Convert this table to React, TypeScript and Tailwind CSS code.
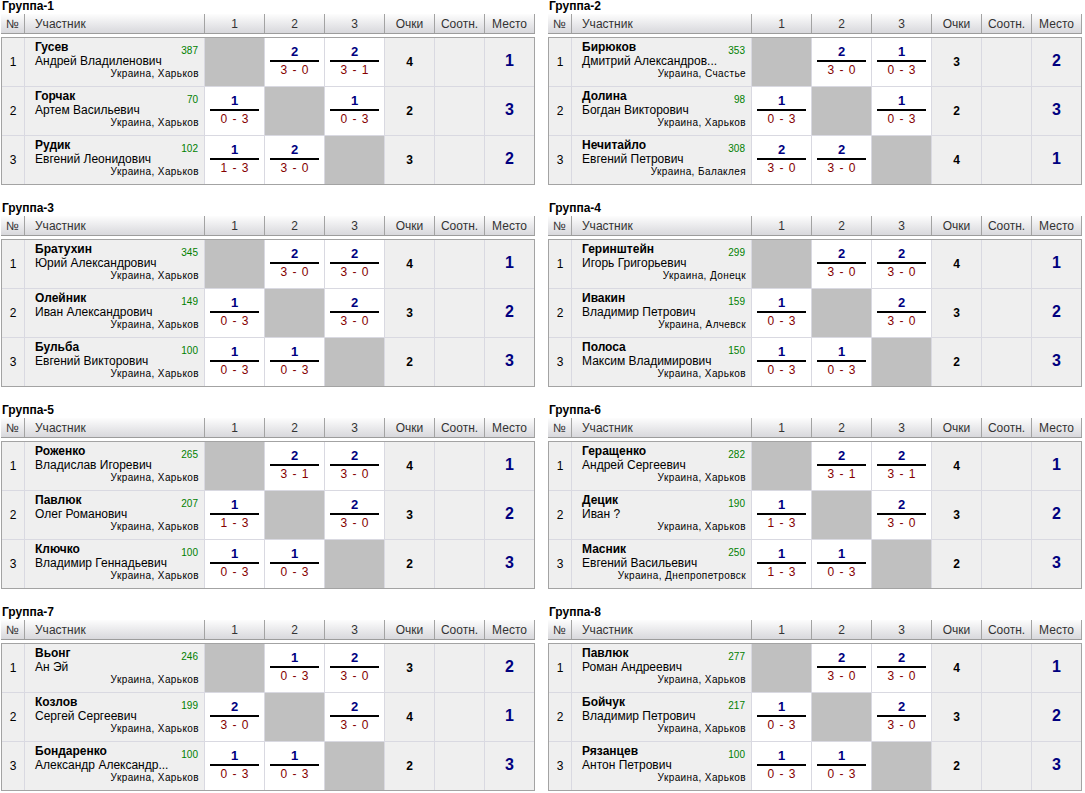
type Game = [number, string] | null;

type Player = {
  last: string;
  first: string;
  rating: number;
  city: string;
  games: Game[];
  points: number;
  place: number;
};

type Group = { title: string; players: Player[] };

const KH = "Украина, Харьков";

const groups: Group[] = [
  {
    title: "Группа-1",
    players: [
      { last: "Гусев", first: "Андрей Владиленович", rating: 387, city: KH, games: [null, [2, "3 - 0"], [2, "3 - 1"]], points: 4, place: 1 },
      { last: "Горчак", first: "Артем Васильевич", rating: 70, city: KH, games: [[1, "0 - 3"], null, [1, "0 - 3"]], points: 2, place: 3 },
      { last: "Рудик", first: "Евгений Леонидович", rating: 102, city: KH, games: [[1, "1 - 3"], [2, "3 - 0"], null], points: 3, place: 2 },
    ],
  },
  {
    title: "Группа-2",
    players: [
      { last: "Бирюков", first: "Дмитрий Александров...", rating: 353, city: "Украина, Счастье", games: [null, [2, "3 - 0"], [1, "0 - 3"]], points: 3, place: 2 },
      { last: "Долина", first: "Богдан Викторович", rating: 98, city: KH, games: [[1, "0 - 3"], null, [1, "0 - 3"]], points: 2, place: 3 },
      { last: "Нечитайло", first: "Евгений Петрович", rating: 308, city: "Украина, Балаклея", games: [[2, "3 - 0"], [2, "3 - 0"], null], points: 4, place: 1 },
    ],
  },
  {
    title: "Группа-3",
    players: [
      { last: "Братухин", first: "Юрий Александрович", rating: 345, city: KH, games: [null, [2, "3 - 0"], [2, "3 - 0"]], points: 4, place: 1 },
      { last: "Олейник", first: "Иван Александрович", rating: 149, city: KH, games: [[1, "0 - 3"], null, [2, "3 - 0"]], points: 3, place: 2 },
      { last: "Бульба", first: "Евгений Викторович", rating: 100, city: KH, games: [[1, "0 - 3"], [1, "0 - 3"], null], points: 2, place: 3 },
    ],
  },
  {
    title: "Группа-4",
    players: [
      { last: "Геринштейн", first: "Игорь Григорьевич", rating: 299, city: "Украина, Донецк", games: [null, [2, "3 - 0"], [2, "3 - 0"]], points: 4, place: 1 },
      { last: "Ивакин", first: "Владимир Петрович", rating: 159, city: "Украина, Алчевск", games: [[1, "0 - 3"], null, [2, "3 - 0"]], points: 3, place: 2 },
      { last: "Полоса", first: "Максим Владимирович", rating: 150, city: KH, games: [[1, "0 - 3"], [1, "0 - 3"], null], points: 2, place: 3 },
    ],
  },
  {
    title: "Группа-5",
    players: [
      { last: "Роженко", first: "Владислав Игоревич", rating: 265, city: KH, games: [null, [2, "3 - 1"], [2, "3 - 0"]], points: 4, place: 1 },
      { last: "Павлюк", first: "Олег Романович", rating: 207, city: KH, games: [[1, "1 - 3"], null, [2, "3 - 0"]], points: 3, place: 2 },
      { last: "Ключко", first: "Владимир Геннадьевич", rating: 100, city: KH, games: [[1, "0 - 3"], [1, "0 - 3"], null], points: 2, place: 3 },
    ],
  },
  {
    title: "Группа-6",
    players: [
      { last: "Геращенко", first: "Андрей Сергеевич", rating: 282, city: KH, games: [null, [2, "3 - 1"], [2, "3 - 1"]], points: 4, place: 1 },
      { last: "Децик", first: "Иван ?", rating: 190, city: KH, games: [[1, "1 - 3"], null, [2, "3 - 0"]], points: 3, place: 2 },
      { last: "Масник", first: "Евгений Васильевич", rating: 250, city: "Украина, Днепропетровск", games: [[1, "1 - 3"], [1, "0 - 3"], null], points: 2, place: 3 },
    ],
  },
  {
    title: "Группа-7",
    players: [
      { last: "Вьонг", first: "Ан Эй", rating: 246, city: KH, games: [null, [1, "0 - 3"], [2, "3 - 0"]], points: 3, place: 2 },
      { last: "Козлов", first: "Сергей Сергеевич", rating: 199, city: KH, games: [[2, "3 - 0"], null, [2, "3 - 0"]], points: 4, place: 1 },
      { last: "Бондаренко", first: "Александр Александр...", rating: 100, city: KH, games: [[1, "0 - 3"], [1, "0 - 3"], null], points: 2, place: 3 },
    ],
  },
  {
    title: "Группа-8",
    players: [
      { last: "Павлюк", first: "Роман Андреевич", rating: 277, city: KH, games: [null, [2, "3 - 0"], [2, "3 - 0"]], points: 4, place: 1 },
      { last: "Бойчук", first: "Владимир Петрович", rating: 217, city: KH, games: [[1, "0 - 3"], null, [2, "3 - 0"]], points: 3, place: 2 },
      { last: "Рязанцев", first: "Антон Петрович", rating: 100, city: KH, games: [[1, "0 - 3"], [1, "0 - 3"], null], points: 2, place: 3 },
    ],
  },
];

const headCell = "flex items-center justify-center border-r border-[#a3a3a3]";

function HeaderRow() {
  return (
    <div className="grid h-[20px] grid-cols-[24px_180px_60px_60px_60px_50px_50px_50px] border-b border-[#9c9c9c] bg-linear-to-b from-[#fdfdfd] to-[#d8d8dc] text-[12px] leading-none text-[#333]">
      <div className={headCell}>№</div>
      <div className="flex items-center border-r border-[#a3a3a3] pl-[10px]">Участник</div>
      <div className={headCell}>1</div>
      <div className={headCell}>2</div>
      <div className={headCell}>3</div>
      <div className={headCell}>Очки</div>
      <div className={headCell}>Соотн.</div>
      <div className={headCell}>Место</div>
    </div>
  );
}

function ScoreCell({ g }: { g: Game }) {
  if (!g) return <div className="h-[48px] bg-[#c0c0c0]" />;
  return (
    <div className="flex h-[48px] flex-col items-center bg-white pt-[6px]">
      <div className="text-[13px] font-bold leading-[15px] text-[#00007f]">{g[0]}</div>
      <div className="mt-px h-[2px] w-[49px] bg-black" />
      <div className="mt-px pl-px text-[12px] leading-[14px] tracking-[1px] text-[#850000]">{g[1]}</div>
    </div>
  );
}

function GroupTable({ group }: { group: Group }) {
  return (
    <div>
      <div className="h-[14px] pl-px text-[12px] font-bold leading-[12px] text-black">{group.title}</div>
      <HeaderRow />
      <div className="mt-[3px] grid grid-cols-[22px_179px_59px_59px_59px_49px_49px_49px] gap-px border border-[#a3a3a3] bg-[#d9d9e1] text-black">
        {group.players.map((p, i) => (
          <div key={p.last} className="contents">
            <div className="flex h-[48px] items-center justify-center bg-[#efefef] text-[12px]">{i + 1}</div>
            <div className="flex h-[48px] flex-col bg-[#efefef] pl-[10px] pr-[5px] pt-[2px]">
              <div className="flex items-start justify-between">
                <span className="text-[12px] font-bold leading-[14px]">{p.last}</span>
                <span className="mr-px mt-[7px] text-[10px] leading-[7px] text-[#008000]">{p.rating}</span>
              </div>
              <div className="whitespace-nowrap text-[12px] leading-[14px]">{p.first}</div>
              <div className="whitespace-nowrap text-right text-[10px] leading-[12px] tracking-[0.4px]">{p.city}</div>
            </div>
            {p.games.map((g, j) => (
              <ScoreCell key={j} g={g} />
            ))}
            <div className="flex h-[48px] items-center justify-center bg-[#efefef] text-[12px] font-bold">{p.points}</div>
            <div className="h-[48px] bg-[#efefef]" />
            <div className="flex h-[48px] items-center justify-center bg-[#efefef] pb-[2px] text-[16px] font-bold text-[#00007f]">
              {p.place}
            </div>
          </div>
        ))}
      </div>
    </div>
  );
}

export default function App() {
  return (
    <div className="min-h-[793px] bg-white font-['Liberation_Sans',Arial,sans-serif]">
      <div className="grid grid-cols-[534px_534px] gap-x-[13px] gap-y-[17px] pl-px">
        {groups.map((g) => (
          <GroupTable key={g.title} group={g} />
        ))}
      </div>
    </div>
  );
}
